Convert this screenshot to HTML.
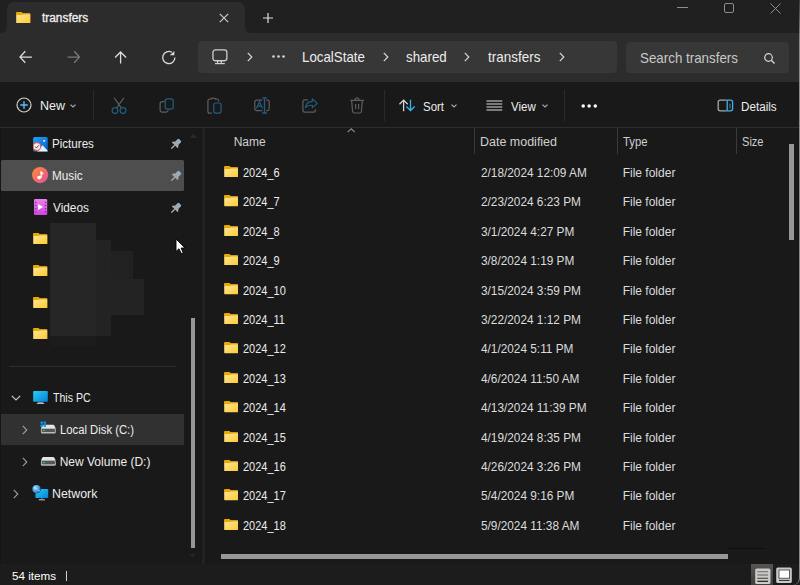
<!DOCTYPE html>
<html><head><meta charset="utf-8"><style>
html,body{margin:0;padding:0;width:800px;height:585px;overflow:hidden;background:#191919;}
.r{position:absolute;display:block;}
.t{position:absolute;white-space:nowrap;line-height:1;font-family:"Liberation Sans", sans-serif;}
</style></head><body>
<svg width="0" height="0" style="position:absolute"><defs><linearGradient id="fg" x1="0" y1="0" x2="1" y2="1"><stop offset="0" stop-color="#ffe690"/><stop offset="1" stop-color="#fcc934"/></linearGradient></defs></svg>
<div class="r" style="left:0px;top:0px;width:800px;height:33px;background:#202020;"></div>
<div class="r" style="left:7px;top:2px;width:238px;height:40px;background:#2c2c2c;border-radius:7px 7px 0 0"></div>
<div class="r" style="left:0;top:25px;width:8px;height:9px;background:#2c2c2c"></div>
<div class="r" style="left:0;top:0;width:7px;height:33px;background:#202020;border-radius:0 0 6px 0"></div>
<div class="r" style="left:244px;top:25px;width:8px;height:9px;background:#2c2c2c"></div>
<div class="r" style="left:245px;top:0;width:555px;height:33px;background:#202020;border-radius:0 0 0 6px"></div>
<svg class="r" style="left:16.2px;top:12px" width="14.6" height="11.4" viewBox="0 0 14.6 11.4"><path d="M0.3 1.1 Q0.3 0.1 1.3 0.1 L4.9 0.1 Q5.4 0.1 5.8 0.5 L6.6 1.3 L13.5 1.3 Q14.4 1.3 14.4 2.2 L14.4 3 L0.3 3 Z" fill="#f7c640"/><path d="M0.3 1.1 Q0.3 0.1 1.3 0.1 L4.9 0.1 Q5.4 0.1 5.8 0.5 L6.6 1.3 L6.6 3 L0.3 3 Z" fill="#eba800"/><path d="M0.2 2.9 L14.4 2.9 L14.4 10.5 Q14.4 11.3 13.6 11.3 L1 11.3 Q0.2 11.3 0.2 10.5 Z" fill="url(#fg)"/></svg>
<div class="t" style="left:42.00px;top:11.84px;font-size:12px;color:#f0f0f0;-webkit-text-stroke:0.3px #f0f0f0;transform:scaleX(0.99);transform-origin:0 0;">transfers</div>
<svg class="r" style="left:219px;top:13px" width="10" height="10" viewBox="0 0 10 10"><path d="M0.8 0.8 L9.2 9.2 M9.2 0.8 L0.8 9.2" stroke="#d0d0d0" stroke-width="1.1"/></svg>
<svg class="r" style="left:263px;top:13px" width="10" height="10" viewBox="0 0 10 10"><path d="M5 0 L5 10 M0 5 L10 5" stroke="#e0e0e0" stroke-width="1.2"/></svg>
<svg class="r" style="left:677px;top:7px" width="11" height="1" viewBox="0 0 11 1"><path d="M0 0.5 L11 0.5" stroke="#8c8c8c" stroke-width="1"/></svg>
<svg class="r" style="left:724px;top:3px" width="10" height="10" viewBox="0 0 10 10"><rect x="0.5" y="0.5" width="9" height="9" rx="1.5" fill="none" stroke="#8c8c8c" stroke-width="1"/></svg>
<svg class="r" style="left:770px;top:3px" width="11" height="11" viewBox="0 0 11 11"><path d="M0.5 0.5 L10.5 10.5 M10.5 0.5 L0.5 10.5" stroke="#8c8c8c" stroke-width="1"/></svg>
<div class="r" style="left:0px;top:33px;width:800px;height:49px;background:#2c2c2c;"></div>
<svg class="r" style="left:14px;top:46px" width="30" height="22" viewBox="0 0 30 22"><path d="M11.3 5.3 L6 11.1 L11.3 16.8 M6.4 11.1 H17.9" fill="none" stroke="#dcdcdc" stroke-width="1.3"/></svg>
<svg class="r" style="left:62px;top:46px" width="30" height="22" viewBox="0 0 30 22"><path d="M12.2 5.3 L17.5 11.1 L12.2 16.8 M17.1 11.1 H5.6" fill="none" stroke="#7a7a7a" stroke-width="1.3"/></svg>
<svg class="r" style="left:108px;top:46px" width="30" height="22" viewBox="0 0 30 22"><path d="M7.1 11.5 L12.6 6 L18.1 11.5 M12.6 6.5 V17.5" fill="none" stroke="#dcdcdc" stroke-width="1.3"/></svg>
<svg class="r" style="left:156px;top:46px" width="30" height="22" viewBox="0 0 30 22"><path d="M15.85 6.22 A6.1 6.1 0 1 0 18.9 11.5" fill="none" stroke="#dcdcdc" stroke-width="1.3"/><path d="M13.8 9.3 L18.3 4.9 L18.3 9.3 Z" fill="#dcdcdc"/></svg>
<div class="r" style="left:198px;top:41px;width:419px;height:31.5px;background:#373737;border-radius:4px"></div>
<svg class="r" style="left:212px;top:48.5px" width="16" height="16" viewBox="0 0 16 16"><rect x="0.95" y="0.95" width="13.9" height="10.8" rx="2.4" fill="none" stroke="#cfcfcf" stroke-width="1.3"/><path d="M5.6 11.5 V14.2 M9.3 11.5 V14.2" stroke="#cfcfcf" stroke-width="1.2"/><path d="M3 14.6 H12.8" stroke="#cfcfcf" stroke-width="1.2"/></svg>
<svg class="r" style="left:247px;top:52.1px" width="6" height="10" viewBox="0 0 6 10"><path d="M0.8 0.8 L4.8 5 L0.8 9.2" fill="none" stroke="#d8d8d8" stroke-width="1.2"/></svg>
<svg class="r" style="left:272px;top:55px" width="13" height="3" viewBox="0 0 13 3"><circle cx="1.5" cy="1.5" r="1.3" fill="#d8d8d8"/><circle cx="6.5" cy="1.5" r="1.3" fill="#d8d8d8"/><circle cx="11.5" cy="1.5" r="1.3" fill="#d8d8d8"/></svg>
<div class="t" style="left:301.70px;top:49.73px;font-size:14.5px;color:#ededed;transform:scaleX(0.918);transform-origin:0 0;">LocalState</div>
<svg class="r" style="left:383px;top:52.1px" width="6" height="10" viewBox="0 0 6 10"><path d="M0.8 0.8 L4.8 5 L0.8 9.2" fill="none" stroke="#d8d8d8" stroke-width="1.2"/></svg>
<div class="t" style="left:405.50px;top:49.73px;font-size:14.5px;color:#ededed;transform:scaleX(0.918);transform-origin:0 0;">shared</div>
<svg class="r" style="left:464px;top:52.1px" width="6" height="10" viewBox="0 0 6 10"><path d="M0.8 0.8 L4.8 5 L0.8 9.2" fill="none" stroke="#d8d8d8" stroke-width="1.2"/></svg>
<div class="t" style="left:488.00px;top:49.73px;font-size:14.5px;color:#ededed;transform:scaleX(0.929);transform-origin:0 0;">transfers</div>
<svg class="r" style="left:558.5px;top:52.1px" width="6" height="10" viewBox="0 0 6 10"><path d="M0.8 0.8 L4.8 5 L0.8 9.2" fill="none" stroke="#d8d8d8" stroke-width="1.2"/></svg>
<div class="r" style="left:625.5px;top:41.5px;width:163px;height:31.5px;background:#373737;border-radius:4px"></div>
<div class="t" style="left:639.60px;top:50.73px;font-size:14.5px;color:#c8c8c8;transform:scaleX(0.921);transform-origin:0 0;">Search transfers</div>
<svg class="r" style="left:764px;top:52.5px" width="11" height="11" viewBox="0 0 11 11"><circle cx="4.5" cy="4.5" r="3.8" fill="none" stroke="#d8d8d8" stroke-width="1.2"/><path d="M7.3 7.3 L10.5 10.5" stroke="#d8d8d8" stroke-width="1.3"/></svg>
<div class="r" style="left:0px;top:82px;width:800px;height:45px;background:#191919;"></div>
<div class="r" style="left:0px;top:127px;width:800px;height:1px;background:#2e2e2e;"></div>
<svg class="r" style="left:16px;top:97px" width="16" height="16" viewBox="0 0 16 16"><circle cx="8" cy="8" r="7" fill="none" stroke="#cfcfcf" stroke-width="1.2"/><path d="M8 4.2 L8 11.8 M4.2 8 L11.8 8" stroke="#4cc2ff" stroke-width="1.4"/></svg>
<div class="t" style="left:39.70px;top:100.34px;font-size:12px;color:#ededed;transform:scaleX(1.04);transform-origin:0 0;">New</div>
<svg class="r" style="left:70px;top:103.5px" width="6" height="4" viewBox="0 0 6 4"><path d="M0.5 0.6 L3 3 L5.5 0.6" fill="none" stroke="#a8a8a8" stroke-width="1.2"/></svg>
<div class="r" style="left:93px;top:90px;width:1px;height:30px;background:#2b2b2b;"></div>
<svg class="r" style="left:108px;top:94px" width="22" height="22" viewBox="0 0 22 22"><path d="M6.2 3.9 L13.3 13.9 M15.8 3.9 L8.7 13.9" stroke="#5e5e5e" stroke-width="1.1" fill="none"/><circle cx="7" cy="16.5" r="2.9" fill="none" stroke="#1f5f87" stroke-width="1.15"/><circle cx="15" cy="16.5" r="2.9" fill="none" stroke="#1f5f87" stroke-width="1.15"/></svg>
<svg class="r" style="left:155px;top:94px" width="22" height="22" viewBox="0 0 22 22"><path d="M9.6 7.7 L7.2 7.7 Q5.1 7.7 5.1 9.8 L5.1 16.1 Q5.1 18.2 7.2 18.2 L11.1 18.2 Q13 18.2 13.2 16.3" fill="none" stroke="#5e5e5e" stroke-width="1.2"/><rect x="10.2" y="4.9" width="8" height="10.3" rx="2.2" fill="none" stroke="#1f5f87" stroke-width="1.2"/></svg>
<svg class="r" style="left:203px;top:94px" width="22" height="22" viewBox="0 0 22 22"><path d="M8 5 L6.9 5 Q4.9 5 4.9 7 L4.9 17.2 Q4.9 19.2 6.9 19.2 L8.8 19.2 M12.6 5 L13.7 5 Q15.7 5 15.7 7 L15.7 7.6" fill="none" stroke="#5e5e5e" stroke-width="1.2"/><path d="M7.6 5.6 Q7.8 4.1 10.3 4.1 Q12.8 4.1 13 5.6" fill="none" stroke="#5e5e5e" stroke-width="1.2"/><rect x="10.8" y="9" width="7.2" height="10.1" rx="2" fill="none" stroke="#1f5f87" stroke-width="1.2"/></svg>
<svg class="r" style="left:251px;top:94px" width="22" height="22" viewBox="0 0 22 22"><path d="M11.3 6.2 L5.6 6.2 Q3.8 6.2 3.8 8 L3.8 14.8 Q3.8 16.6 5.6 16.6 L11.3 16.6 M15.2 6.2 L16.4 6.2 Q18.2 6.2 18.2 8 L18.2 14.8 Q18.2 16.6 16.4 16.6 L15.2 16.6" fill="none" stroke="#5e5e5e" stroke-width="1.2"/><path d="M13.5 3.5 V19.3 M11.3 3.8 H15.8 M11.3 19 H15.8" stroke="#1f5f87" stroke-width="1.3"/><path d="M5.4 14.4 L8.5 7.9 L11.6 14.4 M6.5 12.2 H10.5" fill="none" stroke="#1f5f87" stroke-width="1.2"/></svg>
<svg class="r" style="left:298px;top:94px" width="22" height="22" viewBox="0 0 22 22"><path d="M9.8 5.8 L6.8 5.8 Q4.9 5.8 4.9 7.8 L4.9 16.3 Q4.9 18.2 6.8 18.2 L15.5 18.2 Q17.4 18.2 17.4 16.3 L17.4 15.2" fill="none" stroke="#5e5e5e" stroke-width="1.2"/><path d="M14.3 4.9 L19.2 9.4 L14.3 13.6 L14.3 11.3 Q9.5 11 7.5 13.6 Q8.5 7.6 14.3 7.3 Z" fill="none" stroke="#1f5f87" stroke-width="1.2" stroke-linejoin="round"/></svg>
<svg class="r" style="left:346px;top:94px" width="22" height="22" viewBox="0 0 22 22"><path d="M4.1 6.3 H18 M8.8 6.2 Q9.3 3.9 11 3.9 Q12.7 3.9 13.2 6.2 M5.6 6.3 L6.6 17.2 Q6.8 19 8.6 19 L13.4 19 Q15.2 19 15.4 17.2 L16.4 6.3 M9.6 10 V15 M12.6 10 V15" fill="none" stroke="#5e5e5e" stroke-width="1.2"/></svg>
<div class="r" style="left:384px;top:90px;width:1px;height:31px;background:#2b2b2b;"></div>
<svg class="r" style="left:394px;top:94px" width="26" height="22" viewBox="0 0 26 22"><path d="M9.6 17.3 V6.3 M5.5 10.2 L9.6 6.1 L13.7 10.2" fill="none" stroke="#d4d4d4" stroke-width="1.3"/><path d="M16.5 5.8 V16.3 M12.4 12.5 L16.5 16.5 L20.6 12.5" fill="none" stroke="#38b4f0" stroke-width="1.3"/></svg>
<div class="t" style="left:423.00px;top:100.54px;font-size:12px;color:#ededed;transform:scaleX(0.955);transform-origin:0 0;">Sort</div>
<svg class="r" style="left:451px;top:103.5px" width="6" height="4" viewBox="0 0 6 4"><path d="M0.5 0.6 L3 3 L5.5 0.6" fill="none" stroke="#a8a8a8" stroke-width="1.2"/></svg>
<svg class="r" style="left:482px;top:94px" width="26" height="22" viewBox="0 0 26 22"><path d="M4.5 7 H20.3 M4.5 10 H20.3 M4.5 13 H20.3 M4.5 16 H20.3" stroke="#9c9c9c" stroke-width="1.7"/></svg>
<div class="t" style="left:510.60px;top:100.54px;font-size:12px;color:#ededed;transform:scaleX(0.962);transform-origin:0 0;">View</div>
<svg class="r" style="left:542px;top:103.5px" width="6" height="4" viewBox="0 0 6 4"><path d="M0.5 0.6 L3 3 L5.5 0.6" fill="none" stroke="#a8a8a8" stroke-width="1.2"/></svg>
<div class="r" style="left:564px;top:90px;width:1px;height:31px;background:#2b2b2b;"></div>
<svg class="r" style="left:581px;top:104px" width="17" height="4" viewBox="0 0 17 4"><circle cx="2.2" cy="1.9" r="1.75" fill="#ffffff"/><circle cx="8.1" cy="1.9" r="1.75" fill="#ffffff"/><circle cx="14.3" cy="1.9" r="1.75" fill="#ffffff"/></svg>
<svg class="r" style="left:712px;top:94px" width="26" height="22" viewBox="0 0 26 22"><path d="M14.6 6.2 L8.3 6.2 Q6.2 6.2 6.2 8.3 L6.2 14.7 Q6.2 16.8 8.3 16.8 L14.6 16.8" fill="none" stroke="#a8a8a8" stroke-width="1.3"/><path d="M15.2 6.2 L18.5 6.2 Q20.6 6.2 20.6 8.3 L20.6 14.7 Q20.6 16.8 18.5 16.8 L15.2 16.8 Z" fill="none" stroke="#40b0ea" stroke-width="1.3"/><rect x="17.4" y="9.6" width="1.1" height="4.8" fill="#2f7fae"/></svg>
<div class="t" style="left:740.80px;top:100.54px;font-size:12px;color:#ededed;transform:scaleX(0.972);transform-origin:0 0;">Details</div>
<div class="r" style="left:0px;top:128px;width:202px;height:436px;background:#191919;"></div>
<div class="r" style="left:202px;top:128px;width:2.8px;height:436px;background:#222222;"></div>
<div class="r" style="left:1px;top:160px;width:183px;height:30.5px;background:#4e4e4e;border-radius:1.5px"></div>
<svg class="r" style="left:33px;top:136.5px" width="15" height="15" viewBox="0 0 15 15"><defs><linearGradient id="pg" x1="0" y1="0" x2="0.6" y2="1"><stop offset="0" stop-color="#249ff6"/><stop offset="1" stop-color="#0866d2"/></linearGradient></defs><rect x="0.1" y="0" width="14.6" height="14.5" rx="1.5" fill="url(#pg)"/><path d="M4 14.5 L9.6 8.2 L14.7 13.8 L14.7 14.5 Z" fill="#e6f3ff"/><rect x="10.2" y="2.9" width="1.9" height="1.9" rx="0.7" fill="#ffffff"/><circle cx="3.9" cy="9.6" r="3.8" fill="#efefef" stroke="#ff5a3c" stroke-width="1.1"/><path d="M2.2 9.6 L3.4 11 L5.8 8.3" fill="none" stroke="#4a4a4a" stroke-width="1"/></svg>
<div class="t" style="left:51.80px;top:138.04px;font-size:12px;color:#ededed;transform:scaleX(0.967);transform-origin:0 0;">Pictures</div>
<svg class="r" style="left:32.3px;top:167.1px" width="17" height="17" viewBox="0 0 17 17"><defs><linearGradient id="mg" x1="0" y1="0" x2="1" y2="1"><stop offset="0" stop-color="#ff8f30"/><stop offset="0.6" stop-color="#f26670"/><stop offset="1" stop-color="#cf55b0"/></linearGradient></defs><circle cx="8.1" cy="8.1" r="8.1" fill="url(#mg)"/><path d="M9.2 4.6 L9.2 10.6" stroke="#fff" stroke-width="1.3"/><path d="M8.6 4.3 L11.6 6.2 L10.6 7.6 L8.6 6.6 Z" fill="#fff"/><ellipse cx="7.1" cy="10.6" rx="2" ry="1.8" fill="#fff"/></svg>
<div class="t" style="left:51.80px;top:170.04px;font-size:12px;color:#ededed;transform:scaleX(0.98);transform-origin:0 0;">Music</div>
<svg class="r" style="left:33.9px;top:199.1px" width="14" height="16" viewBox="0 0 14 16"><defs><linearGradient id="vg" x1="0" y1="0" x2="0" y2="1"><stop offset="0" stop-color="#ec80ee"/><stop offset="1" stop-color="#cf48df"/></linearGradient></defs><rect x="0" y="0" width="13.2" height="16" rx="1.2" fill="url(#vg)"/><path d="M1 3.4 H2.4 M1 6.4 H2.4 M1 9.7 H2.4 M1 12.8 H2.4 M10.8 3.4 H12.2 M10.8 6.4 H12.2 M10.8 9.7 H12.2 M10.8 12.8 H12.2" stroke="#7d3b86" stroke-width="1.3"/><path d="M4.1 4.9 L9.1 8 L4.1 11.1 Z" fill="#ffffff"/></svg>
<div class="t" style="left:52.60px;top:202.04px;font-size:12px;color:#ededed;transform:scaleX(0.983);transform-origin:0 0;">Videos</div>
<svg class="r" style="left:166px;top:134px" width="20" height="20" viewBox="0 0 20 20"><g transform="translate(9.6,10.4) rotate(45) scale(0.9)" fill="#9aabb5"><rect x="-2.6" y="-7" width="5.2" height="6" rx="1.4"/><path d="M-2.6 -2 L-4.6 0.6 Q-4.8 1.4 -4 1.4 L4 1.4 Q4.8 1.4 4.6 0.6 L2.6 -2 Z"/><rect x="-0.75" y="1" width="1.5" height="5.8" rx="0.7"/></g></svg>
<svg class="r" style="left:166px;top:166px" width="20" height="20" viewBox="0 0 20 20"><g transform="translate(9.6,10.4) rotate(45) scale(0.9)" fill="#9aabb5"><rect x="-2.6" y="-7" width="5.2" height="6" rx="1.4"/><path d="M-2.6 -2 L-4.6 0.6 Q-4.8 1.4 -4 1.4 L4 1.4 Q4.8 1.4 4.6 0.6 L2.6 -2 Z"/><rect x="-0.75" y="1" width="1.5" height="5.8" rx="0.7"/></g></svg>
<svg class="r" style="left:166px;top:198px" width="20" height="20" viewBox="0 0 20 20"><g transform="translate(9.6,10.4) rotate(45) scale(0.9)" fill="#9aabb5"><rect x="-2.6" y="-7" width="5.2" height="6" rx="1.4"/><path d="M-2.6 -2 L-4.6 0.6 Q-4.8 1.4 -4 1.4 L4 1.4 Q4.8 1.4 4.6 0.6 L2.6 -2 Z"/><rect x="-0.75" y="1" width="1.5" height="5.8" rx="0.7"/></g></svg>
<div class="r" style="left:50px;top:223px;width:45.7px;height:113px;background:#262626;"></div>
<div class="r" style="left:50px;top:336px;width:45.7px;height:10px;background:#1c1c1c;border-radius:0 0 2px 2px"></div>
<div class="r" style="left:95.7px;top:240px;width:15px;height:96px;background:#232323;"></div>
<div class="r" style="left:110.7px;top:250.7px;width:22px;height:28.4px;background:#212121;"></div>
<div class="r" style="left:110.7px;top:279.1px;width:33.5px;height:35.5px;background:#232323;"></div>
<svg class="r" style="left:33px;top:233px" width="14.6" height="11.4" viewBox="0 0 14.6 11.4"><path d="M0.3 1.1 Q0.3 0.1 1.3 0.1 L4.9 0.1 Q5.4 0.1 5.8 0.5 L6.6 1.3 L13.5 1.3 Q14.4 1.3 14.4 2.2 L14.4 3 L0.3 3 Z" fill="#f7c640"/><path d="M0.3 1.1 Q0.3 0.1 1.3 0.1 L4.9 0.1 Q5.4 0.1 5.8 0.5 L6.6 1.3 L6.6 3 L0.3 3 Z" fill="#eba800"/><path d="M0.2 2.9 L14.4 2.9 L14.4 10.5 Q14.4 11.3 13.6 11.3 L1 11.3 Q0.2 11.3 0.2 10.5 Z" fill="url(#fg)"/></svg>
<svg class="r" style="left:33px;top:264.5px" width="14.6" height="11.4" viewBox="0 0 14.6 11.4"><path d="M0.3 1.1 Q0.3 0.1 1.3 0.1 L4.9 0.1 Q5.4 0.1 5.8 0.5 L6.6 1.3 L13.5 1.3 Q14.4 1.3 14.4 2.2 L14.4 3 L0.3 3 Z" fill="#f7c640"/><path d="M0.3 1.1 Q0.3 0.1 1.3 0.1 L4.9 0.1 Q5.4 0.1 5.8 0.5 L6.6 1.3 L6.6 3 L0.3 3 Z" fill="#eba800"/><path d="M0.2 2.9 L14.4 2.9 L14.4 10.5 Q14.4 11.3 13.6 11.3 L1 11.3 Q0.2 11.3 0.2 10.5 Z" fill="url(#fg)"/></svg>
<svg class="r" style="left:33px;top:296.5px" width="14.6" height="11.4" viewBox="0 0 14.6 11.4"><path d="M0.3 1.1 Q0.3 0.1 1.3 0.1 L4.9 0.1 Q5.4 0.1 5.8 0.5 L6.6 1.3 L13.5 1.3 Q14.4 1.3 14.4 2.2 L14.4 3 L0.3 3 Z" fill="#f7c640"/><path d="M0.3 1.1 Q0.3 0.1 1.3 0.1 L4.9 0.1 Q5.4 0.1 5.8 0.5 L6.6 1.3 L6.6 3 L0.3 3 Z" fill="#eba800"/><path d="M0.2 2.9 L14.4 2.9 L14.4 10.5 Q14.4 11.3 13.6 11.3 L1 11.3 Q0.2 11.3 0.2 10.5 Z" fill="url(#fg)"/></svg>
<svg class="r" style="left:33px;top:328px" width="14.6" height="11.4" viewBox="0 0 14.6 11.4"><path d="M0.3 1.1 Q0.3 0.1 1.3 0.1 L4.9 0.1 Q5.4 0.1 5.8 0.5 L6.6 1.3 L13.5 1.3 Q14.4 1.3 14.4 2.2 L14.4 3 L0.3 3 Z" fill="#f7c640"/><path d="M0.3 1.1 Q0.3 0.1 1.3 0.1 L4.9 0.1 Q5.4 0.1 5.8 0.5 L6.6 1.3 L6.6 3 L0.3 3 Z" fill="#eba800"/><path d="M0.2 2.9 L14.4 2.9 L14.4 10.5 Q14.4 11.3 13.6 11.3 L1 11.3 Q0.2 11.3 0.2 10.5 Z" fill="url(#fg)"/></svg>
<svg class="r" style="left:175px;top:238px" width="11" height="17" viewBox="0 0 11 17"><path d="M1 1 L1 13.5 L4 10.8 L6.2 15.6 L8.2 14.7 L6.1 10 L10 10 Z" fill="#ffffff" stroke="#000000" stroke-width="0.9" stroke-linejoin="round"/></svg>
<svg class="r" style="left:188.5px;top:132px" width="9" height="7" viewBox="0 0 9 7"><path d="M1 6 L4.5 1.5 L8 6 Z" fill="#2a2a2a"/></svg>
<div class="r" style="left:190.5px;top:317.5px;width:4.6px;height:230.5px;background:#979797;"></div>
<svg class="r" style="left:188px;top:552.5px" width="9" height="7" viewBox="0 0 9 7"><path d="M1.5 1 L4.5 5 L7.5 1 Z" fill="#262626"/></svg>
<div class="r" style="left:8.5px;top:366px;width:167.5px;height:1px;background:#2e2e2e;"></div>
<svg class="r" style="left:10.5px;top:394.5px" width="10" height="6" viewBox="0 0 10 6"><path d="M0.8 0.8 L5 5 L9.2 0.8" fill="none" stroke="#c8c8c8" stroke-width="1.2"/></svg>
<svg class="r" style="left:33px;top:391px" width="15" height="13" viewBox="0 0 15 13"><defs><linearGradient id="pcg" x1="0" y1="0" x2="1" y2="1"><stop offset="0" stop-color="#22d0f8"/><stop offset="1" stop-color="#0a7ed6"/></linearGradient></defs><rect x="0.2" y="0.1" width="14.6" height="10.6" rx="0.8" fill="url(#pcg)"/><path d="M5 11.5 H10" stroke="#7f8a92" stroke-width="1"/><path d="M3.8 12.4 H11.2" stroke="#b8c0c6" stroke-width="1.1"/></svg>
<div class="t" style="left:52.60px;top:392.34px;font-size:12px;color:#ededed;transform:scaleX(0.883);transform-origin:0 0;">This PC</div>
<div class="r" style="left:1px;top:414px;width:183px;height:30.5px;background:#313131;"></div>
<svg class="r" style="left:21.5px;top:425px" width="6" height="10" viewBox="0 0 6 10"><path d="M0.8 0.8 L4.8 5 L0.8 9.2" fill="none" stroke="#a0a0a0" stroke-width="1.1"/></svg>
<svg class="r" style="left:40px;top:420px" width="17" height="15" viewBox="0 0 17 15"><g transform="translate(0,4.8)"><path d="M3.3 0 L13.2 0 Q13.8 0 14.2 0.5 L15.8 3.6 L0.9 3.6 L2.4 0.5 Q2.8 0 3.3 0 Z" fill="#e4e4e4"/><rect x="0.9" y="3.3" width="14.9" height="5.5" rx="1.5" fill="#bababa"/><rect x="1.8" y="4.2" width="13.1" height="3.1" rx="0.6" fill="#555555"/><rect x="2.8" y="5.2" width="2.4" height="1.1" rx="0.5" fill="#22c55e"/></g><rect x="0.5" y="1.4" width="2.4" height="2.4" rx="0.6" fill="#0b9bff"/><rect x="3.6" y="1.4" width="2.4" height="2.4" rx="0.6" fill="#0b9bff"/><rect x="0.5" y="4.6" width="2.4" height="2.4" rx="0.6" fill="#0b9bff"/><rect x="3.6" y="4.6" width="2.4" height="2.4" rx="0.6" fill="#0b9bff"/></svg>
<div class="t" style="left:59.70px;top:424.34px;font-size:12px;color:#ededed;transform:scaleX(0.94);transform-origin:0 0;">Local Disk (C:)</div>
<svg class="r" style="left:21.5px;top:457px" width="6" height="10" viewBox="0 0 6 10"><path d="M0.8 0.8 L4.8 5 L0.8 9.2" fill="none" stroke="#a0a0a0" stroke-width="1.1"/></svg>
<svg class="r" style="left:40px;top:456px" width="17" height="10" viewBox="0 0 17 10"><g transform="translate(0,0.9)"><path d="M3.3 0 L13.2 0 Q13.8 0 14.2 0.5 L15.8 3.6 L0.9 3.6 L2.4 0.5 Q2.8 0 3.3 0 Z" fill="#e4e4e4"/><rect x="0.9" y="3.3" width="14.9" height="5.5" rx="1.5" fill="#bababa"/><rect x="1.8" y="4.2" width="13.1" height="3.1" rx="0.6" fill="#555555"/><rect x="2.8" y="5.2" width="2.4" height="1.1" rx="0.5" fill="#22c55e"/></g></svg>
<div class="t" style="left:59.70px;top:456.34px;font-size:12px;color:#ededed;transform:scaleX(1.0);transform-origin:0 0;">New Volume (D:)</div>
<svg class="r" style="left:13px;top:489px" width="6" height="10" viewBox="0 0 6 10"><path d="M0.8 0.8 L4.8 5 L0.8 9.2" fill="none" stroke="#a0a0a0" stroke-width="1.1"/></svg>
<svg class="r" style="left:32px;top:484px" width="18" height="18" viewBox="0 0 18 18"><defs><linearGradient id="nmg" x1="0" y1="0" x2="1" y2="1"><stop offset="0" stop-color="#22d0f8"/><stop offset="1" stop-color="#0a7ed6"/></linearGradient><radialGradient id="glg" cx="0.35" cy="0.35" r="0.7"><stop offset="0" stop-color="#9fe0ff"/><stop offset="1" stop-color="#1a72c0"/></radialGradient></defs><rect x="3.5" y="5" width="12.7" height="9" rx="0.6" fill="url(#nmg)"/><path d="M9.85 14 V15.2" stroke="#7f8a92" stroke-width="1"/><path d="M6.8 15.8 H12.9" stroke="#b8c0c6" stroke-width="1.1"/><circle cx="4.5" cy="5" r="4.3" fill="#191919"/><circle cx="4.5" cy="5" r="4.1" fill="url(#glg)"/><path d="M2.2 4 Q4 3.2 5.5 5.5 Q6.2 7 7.8 6.8" fill="none" stroke="#d8f2ff" stroke-width="0.7" opacity="0.8"/></svg>
<div class="t" style="left:51.80px;top:488.34px;font-size:12px;color:#ededed;transform:scaleX(1.03);transform-origin:0 0;">Network</div>
<div class="r" style="left:204.5px;top:128px;width:596px;height:436px;background:#191919;"></div>
<div class="r" style="left:474px;top:128px;width:1px;height:26px;background:#3a3a3a;"></div>
<div class="r" style="left:617px;top:128px;width:1px;height:26px;background:#3a3a3a;"></div>
<div class="r" style="left:736px;top:128px;width:1px;height:26px;background:#3a3a3a;"></div>
<svg class="r" style="left:340px;top:124px" width="22" height="16" viewBox="0 0 22 16"><path d="M7.7 8.1 L11.2 4.9 L14.8 8.2" fill="none" stroke="#8c8c8c" stroke-width="1.15"/></svg>
<div class="t" style="left:233.70px;top:135.54px;font-size:12px;color:#d0d0d0;">Name</div>
<div class="t" style="left:479.90px;top:135.64px;font-size:12px;color:#d0d0d0;transform:scaleX(1.04);transform-origin:0 0;">Date modified</div>
<div class="t" style="left:623.30px;top:135.64px;font-size:12px;color:#d0d0d0;transform:scaleX(0.94);transform-origin:0 0;">Type</div>
<div class="t" style="left:742.30px;top:135.64px;font-size:12px;color:#d0d0d0;transform:scaleX(0.922);transform-origin:0 0;">Size</div>
<svg class="r" style="left:223.6px;top:165.8px" width="14.6" height="11.4" viewBox="0 0 14.6 11.4"><path d="M0.3 1.1 Q0.3 0.1 1.3 0.1 L4.9 0.1 Q5.4 0.1 5.8 0.5 L6.6 1.3 L13.5 1.3 Q14.4 1.3 14.4 2.2 L14.4 3 L0.3 3 Z" fill="#f7c640"/><path d="M0.3 1.1 Q0.3 0.1 1.3 0.1 L4.9 0.1 Q5.4 0.1 5.8 0.5 L6.6 1.3 L6.6 3 L0.3 3 Z" fill="#eba800"/><path d="M0.2 2.9 L14.4 2.9 L14.4 10.5 Q14.4 11.3 13.6 11.3 L1 11.3 Q0.2 11.3 0.2 10.5 Z" fill="url(#fg)"/></svg>
<div class="t" style="left:242.80px;top:166.84px;font-size:12px;color:#ededed;transform:scaleX(0.915);transform-origin:0 0;">2024_6</div>
<div class="t" style="left:480.70px;top:166.84px;font-size:12px;color:#dcdcdc;transform:scaleX(0.985);transform-origin:0 0;">2/18/2024 12:09 AM</div>
<div class="t" style="left:622.70px;top:166.84px;font-size:12px;color:#dcdcdc;">File folder</div>
<svg class="r" style="left:223.6px;top:195.217px" width="14.6" height="11.4" viewBox="0 0 14.6 11.4"><path d="M0.3 1.1 Q0.3 0.1 1.3 0.1 L4.9 0.1 Q5.4 0.1 5.8 0.5 L6.6 1.3 L13.5 1.3 Q14.4 1.3 14.4 2.2 L14.4 3 L0.3 3 Z" fill="#f7c640"/><path d="M0.3 1.1 Q0.3 0.1 1.3 0.1 L4.9 0.1 Q5.4 0.1 5.8 0.5 L6.6 1.3 L6.6 3 L0.3 3 Z" fill="#eba800"/><path d="M0.2 2.9 L14.4 2.9 L14.4 10.5 Q14.4 11.3 13.6 11.3 L1 11.3 Q0.2 11.3 0.2 10.5 Z" fill="url(#fg)"/></svg>
<div class="t" style="left:242.80px;top:196.26px;font-size:12px;color:#ededed;transform:scaleX(0.915);transform-origin:0 0;">2024_7</div>
<div class="t" style="left:480.70px;top:196.26px;font-size:12px;color:#dcdcdc;transform:scaleX(0.985);transform-origin:0 0;">2/23/2024 6:23 PM</div>
<div class="t" style="left:622.70px;top:196.26px;font-size:12px;color:#dcdcdc;">File folder</div>
<svg class="r" style="left:223.6px;top:224.63400000000001px" width="14.6" height="11.4" viewBox="0 0 14.6 11.4"><path d="M0.3 1.1 Q0.3 0.1 1.3 0.1 L4.9 0.1 Q5.4 0.1 5.8 0.5 L6.6 1.3 L13.5 1.3 Q14.4 1.3 14.4 2.2 L14.4 3 L0.3 3 Z" fill="#f7c640"/><path d="M0.3 1.1 Q0.3 0.1 1.3 0.1 L4.9 0.1 Q5.4 0.1 5.8 0.5 L6.6 1.3 L6.6 3 L0.3 3 Z" fill="#eba800"/><path d="M0.2 2.9 L14.4 2.9 L14.4 10.5 Q14.4 11.3 13.6 11.3 L1 11.3 Q0.2 11.3 0.2 10.5 Z" fill="url(#fg)"/></svg>
<div class="t" style="left:242.80px;top:225.68px;font-size:12px;color:#ededed;transform:scaleX(0.915);transform-origin:0 0;">2024_8</div>
<div class="t" style="left:480.70px;top:225.68px;font-size:12px;color:#dcdcdc;transform:scaleX(0.985);transform-origin:0 0;">3/1/2024 4:27 PM</div>
<div class="t" style="left:622.70px;top:225.68px;font-size:12px;color:#dcdcdc;">File folder</div>
<svg class="r" style="left:223.6px;top:254.051px" width="14.6" height="11.4" viewBox="0 0 14.6 11.4"><path d="M0.3 1.1 Q0.3 0.1 1.3 0.1 L4.9 0.1 Q5.4 0.1 5.8 0.5 L6.6 1.3 L13.5 1.3 Q14.4 1.3 14.4 2.2 L14.4 3 L0.3 3 Z" fill="#f7c640"/><path d="M0.3 1.1 Q0.3 0.1 1.3 0.1 L4.9 0.1 Q5.4 0.1 5.8 0.5 L6.6 1.3 L6.6 3 L0.3 3 Z" fill="#eba800"/><path d="M0.2 2.9 L14.4 2.9 L14.4 10.5 Q14.4 11.3 13.6 11.3 L1 11.3 Q0.2 11.3 0.2 10.5 Z" fill="url(#fg)"/></svg>
<div class="t" style="left:242.80px;top:255.09px;font-size:12px;color:#ededed;transform:scaleX(0.915);transform-origin:0 0;">2024_9</div>
<div class="t" style="left:480.70px;top:255.09px;font-size:12px;color:#dcdcdc;transform:scaleX(0.985);transform-origin:0 0;">3/8/2024 1:19 PM</div>
<div class="t" style="left:622.70px;top:255.09px;font-size:12px;color:#dcdcdc;">File folder</div>
<svg class="r" style="left:223.6px;top:283.468px" width="14.6" height="11.4" viewBox="0 0 14.6 11.4"><path d="M0.3 1.1 Q0.3 0.1 1.3 0.1 L4.9 0.1 Q5.4 0.1 5.8 0.5 L6.6 1.3 L13.5 1.3 Q14.4 1.3 14.4 2.2 L14.4 3 L0.3 3 Z" fill="#f7c640"/><path d="M0.3 1.1 Q0.3 0.1 1.3 0.1 L4.9 0.1 Q5.4 0.1 5.8 0.5 L6.6 1.3 L6.6 3 L0.3 3 Z" fill="#eba800"/><path d="M0.2 2.9 L14.4 2.9 L14.4 10.5 Q14.4 11.3 13.6 11.3 L1 11.3 Q0.2 11.3 0.2 10.5 Z" fill="url(#fg)"/></svg>
<div class="t" style="left:242.80px;top:284.51px;font-size:12px;color:#ededed;transform:scaleX(0.915);transform-origin:0 0;">2024_10</div>
<div class="t" style="left:480.70px;top:284.51px;font-size:12px;color:#dcdcdc;transform:scaleX(0.985);transform-origin:0 0;">3/15/2024 3:59 PM</div>
<div class="t" style="left:622.70px;top:284.51px;font-size:12px;color:#dcdcdc;">File folder</div>
<svg class="r" style="left:223.6px;top:312.88500000000005px" width="14.6" height="11.4" viewBox="0 0 14.6 11.4"><path d="M0.3 1.1 Q0.3 0.1 1.3 0.1 L4.9 0.1 Q5.4 0.1 5.8 0.5 L6.6 1.3 L13.5 1.3 Q14.4 1.3 14.4 2.2 L14.4 3 L0.3 3 Z" fill="#f7c640"/><path d="M0.3 1.1 Q0.3 0.1 1.3 0.1 L4.9 0.1 Q5.4 0.1 5.8 0.5 L6.6 1.3 L6.6 3 L0.3 3 Z" fill="#eba800"/><path d="M0.2 2.9 L14.4 2.9 L14.4 10.5 Q14.4 11.3 13.6 11.3 L1 11.3 Q0.2 11.3 0.2 10.5 Z" fill="url(#fg)"/></svg>
<div class="t" style="left:242.80px;top:313.93px;font-size:12px;color:#ededed;transform:scaleX(0.915);transform-origin:0 0;">2024_11</div>
<div class="t" style="left:480.70px;top:313.93px;font-size:12px;color:#dcdcdc;transform:scaleX(0.985);transform-origin:0 0;">3/22/2024 1:12 PM</div>
<div class="t" style="left:622.70px;top:313.93px;font-size:12px;color:#dcdcdc;">File folder</div>
<svg class="r" style="left:223.6px;top:342.302px" width="14.6" height="11.4" viewBox="0 0 14.6 11.4"><path d="M0.3 1.1 Q0.3 0.1 1.3 0.1 L4.9 0.1 Q5.4 0.1 5.8 0.5 L6.6 1.3 L13.5 1.3 Q14.4 1.3 14.4 2.2 L14.4 3 L0.3 3 Z" fill="#f7c640"/><path d="M0.3 1.1 Q0.3 0.1 1.3 0.1 L4.9 0.1 Q5.4 0.1 5.8 0.5 L6.6 1.3 L6.6 3 L0.3 3 Z" fill="#eba800"/><path d="M0.2 2.9 L14.4 2.9 L14.4 10.5 Q14.4 11.3 13.6 11.3 L1 11.3 Q0.2 11.3 0.2 10.5 Z" fill="url(#fg)"/></svg>
<div class="t" style="left:242.80px;top:343.34px;font-size:12px;color:#ededed;transform:scaleX(0.915);transform-origin:0 0;">2024_12</div>
<div class="t" style="left:480.70px;top:343.34px;font-size:12px;color:#dcdcdc;transform:scaleX(0.985);transform-origin:0 0;">4/1/2024 5:11 PM</div>
<div class="t" style="left:622.70px;top:343.34px;font-size:12px;color:#dcdcdc;">File folder</div>
<svg class="r" style="left:223.6px;top:371.719px" width="14.6" height="11.4" viewBox="0 0 14.6 11.4"><path d="M0.3 1.1 Q0.3 0.1 1.3 0.1 L4.9 0.1 Q5.4 0.1 5.8 0.5 L6.6 1.3 L13.5 1.3 Q14.4 1.3 14.4 2.2 L14.4 3 L0.3 3 Z" fill="#f7c640"/><path d="M0.3 1.1 Q0.3 0.1 1.3 0.1 L4.9 0.1 Q5.4 0.1 5.8 0.5 L6.6 1.3 L6.6 3 L0.3 3 Z" fill="#eba800"/><path d="M0.2 2.9 L14.4 2.9 L14.4 10.5 Q14.4 11.3 13.6 11.3 L1 11.3 Q0.2 11.3 0.2 10.5 Z" fill="url(#fg)"/></svg>
<div class="t" style="left:242.80px;top:372.76px;font-size:12px;color:#ededed;transform:scaleX(0.915);transform-origin:0 0;">2024_13</div>
<div class="t" style="left:480.70px;top:372.76px;font-size:12px;color:#dcdcdc;transform:scaleX(0.985);transform-origin:0 0;">4/6/2024 11:50 AM</div>
<div class="t" style="left:622.70px;top:372.76px;font-size:12px;color:#dcdcdc;">File folder</div>
<svg class="r" style="left:223.6px;top:401.136px" width="14.6" height="11.4" viewBox="0 0 14.6 11.4"><path d="M0.3 1.1 Q0.3 0.1 1.3 0.1 L4.9 0.1 Q5.4 0.1 5.8 0.5 L6.6 1.3 L13.5 1.3 Q14.4 1.3 14.4 2.2 L14.4 3 L0.3 3 Z" fill="#f7c640"/><path d="M0.3 1.1 Q0.3 0.1 1.3 0.1 L4.9 0.1 Q5.4 0.1 5.8 0.5 L6.6 1.3 L6.6 3 L0.3 3 Z" fill="#eba800"/><path d="M0.2 2.9 L14.4 2.9 L14.4 10.5 Q14.4 11.3 13.6 11.3 L1 11.3 Q0.2 11.3 0.2 10.5 Z" fill="url(#fg)"/></svg>
<div class="t" style="left:242.80px;top:402.18px;font-size:12px;color:#ededed;transform:scaleX(0.915);transform-origin:0 0;">2024_14</div>
<div class="t" style="left:480.70px;top:402.18px;font-size:12px;color:#dcdcdc;transform:scaleX(0.985);transform-origin:0 0;">4/13/2024 11:39 PM</div>
<div class="t" style="left:622.70px;top:402.18px;font-size:12px;color:#dcdcdc;">File folder</div>
<svg class="r" style="left:223.6px;top:430.55300000000005px" width="14.6" height="11.4" viewBox="0 0 14.6 11.4"><path d="M0.3 1.1 Q0.3 0.1 1.3 0.1 L4.9 0.1 Q5.4 0.1 5.8 0.5 L6.6 1.3 L13.5 1.3 Q14.4 1.3 14.4 2.2 L14.4 3 L0.3 3 Z" fill="#f7c640"/><path d="M0.3 1.1 Q0.3 0.1 1.3 0.1 L4.9 0.1 Q5.4 0.1 5.8 0.5 L6.6 1.3 L6.6 3 L0.3 3 Z" fill="#eba800"/><path d="M0.2 2.9 L14.4 2.9 L14.4 10.5 Q14.4 11.3 13.6 11.3 L1 11.3 Q0.2 11.3 0.2 10.5 Z" fill="url(#fg)"/></svg>
<div class="t" style="left:242.80px;top:431.60px;font-size:12px;color:#ededed;transform:scaleX(0.915);transform-origin:0 0;">2024_15</div>
<div class="t" style="left:480.70px;top:431.60px;font-size:12px;color:#dcdcdc;transform:scaleX(0.985);transform-origin:0 0;">4/19/2024 8:35 PM</div>
<div class="t" style="left:622.70px;top:431.60px;font-size:12px;color:#dcdcdc;">File folder</div>
<svg class="r" style="left:223.6px;top:459.97px" width="14.6" height="11.4" viewBox="0 0 14.6 11.4"><path d="M0.3 1.1 Q0.3 0.1 1.3 0.1 L4.9 0.1 Q5.4 0.1 5.8 0.5 L6.6 1.3 L13.5 1.3 Q14.4 1.3 14.4 2.2 L14.4 3 L0.3 3 Z" fill="#f7c640"/><path d="M0.3 1.1 Q0.3 0.1 1.3 0.1 L4.9 0.1 Q5.4 0.1 5.8 0.5 L6.6 1.3 L6.6 3 L0.3 3 Z" fill="#eba800"/><path d="M0.2 2.9 L14.4 2.9 L14.4 10.5 Q14.4 11.3 13.6 11.3 L1 11.3 Q0.2 11.3 0.2 10.5 Z" fill="url(#fg)"/></svg>
<div class="t" style="left:242.80px;top:461.01px;font-size:12px;color:#ededed;transform:scaleX(0.915);transform-origin:0 0;">2024_16</div>
<div class="t" style="left:480.70px;top:461.01px;font-size:12px;color:#dcdcdc;transform:scaleX(0.985);transform-origin:0 0;">4/26/2024 3:26 PM</div>
<div class="t" style="left:622.70px;top:461.01px;font-size:12px;color:#dcdcdc;">File folder</div>
<svg class="r" style="left:223.6px;top:489.387px" width="14.6" height="11.4" viewBox="0 0 14.6 11.4"><path d="M0.3 1.1 Q0.3 0.1 1.3 0.1 L4.9 0.1 Q5.4 0.1 5.8 0.5 L6.6 1.3 L13.5 1.3 Q14.4 1.3 14.4 2.2 L14.4 3 L0.3 3 Z" fill="#f7c640"/><path d="M0.3 1.1 Q0.3 0.1 1.3 0.1 L4.9 0.1 Q5.4 0.1 5.8 0.5 L6.6 1.3 L6.6 3 L0.3 3 Z" fill="#eba800"/><path d="M0.2 2.9 L14.4 2.9 L14.4 10.5 Q14.4 11.3 13.6 11.3 L1 11.3 Q0.2 11.3 0.2 10.5 Z" fill="url(#fg)"/></svg>
<div class="t" style="left:242.80px;top:490.43px;font-size:12px;color:#ededed;transform:scaleX(0.915);transform-origin:0 0;">2024_17</div>
<div class="t" style="left:480.70px;top:490.43px;font-size:12px;color:#dcdcdc;transform:scaleX(0.985);transform-origin:0 0;">5/4/2024 9:16 PM</div>
<div class="t" style="left:622.70px;top:490.43px;font-size:12px;color:#dcdcdc;">File folder</div>
<svg class="r" style="left:223.6px;top:518.804px" width="14.6" height="11.4" viewBox="0 0 14.6 11.4"><path d="M0.3 1.1 Q0.3 0.1 1.3 0.1 L4.9 0.1 Q5.4 0.1 5.8 0.5 L6.6 1.3 L13.5 1.3 Q14.4 1.3 14.4 2.2 L14.4 3 L0.3 3 Z" fill="#f7c640"/><path d="M0.3 1.1 Q0.3 0.1 1.3 0.1 L4.9 0.1 Q5.4 0.1 5.8 0.5 L6.6 1.3 L6.6 3 L0.3 3 Z" fill="#eba800"/><path d="M0.2 2.9 L14.4 2.9 L14.4 10.5 Q14.4 11.3 13.6 11.3 L1 11.3 Q0.2 11.3 0.2 10.5 Z" fill="url(#fg)"/></svg>
<div class="t" style="left:242.80px;top:519.85px;font-size:12px;color:#ededed;transform:scaleX(0.915);transform-origin:0 0;">2024_18</div>
<div class="t" style="left:480.70px;top:519.85px;font-size:12px;color:#dcdcdc;transform:scaleX(0.985);transform-origin:0 0;">5/9/2024 11:38 AM</div>
<div class="t" style="left:622.70px;top:519.85px;font-size:12px;color:#dcdcdc;">File folder</div>
<div class="r" style="left:789px;top:144px;width:5.3px;height:96px;background:#979797;"></div>
<div class="r" style="left:221px;top:553.7px;width:507px;height:5.3px;background:#979797;"></div>
<div class="r" style="left:728px;top:547.5px;width:38px;height:1px;background:#0f0f0f;"></div>
<div class="r" style="left:0px;top:564px;width:800px;height:21px;background:#1c1c1c;"></div>
<div class="t" style="left:12.00px;top:570.30px;font-size:11.7px;color:#ffffff;">54 items</div>
<div class="r" style="left:66px;top:571px;width:1px;height:10px;background:#d0d0d0;"></div>
<div class="r" style="left:751px;top:564.2px;width:22px;height:21px;background:linear-gradient(#545454,#3e3e3e);"></div>
<svg class="r" style="left:755px;top:568px" width="16" height="17" viewBox="0 0 16 17"><rect x="0.2" y="0.4" width="15.3" height="15.6" rx="1.6" fill="#cdc9c6"/><path d="M2.3 3.7 H13.1" stroke="#7a7a7a" stroke-width="1.2"/><path d="M2.3 7 H13.1" stroke="#707070" stroke-width="1.2"/><path d="M2.3 10.3 H13.1" stroke="#505050" stroke-width="1.2"/><path d="M2.3 13.3 H13.1" stroke="#1e1e1e" stroke-width="1.2"/></svg>
<svg class="r" style="left:776px;top:567px" width="16" height="17" viewBox="0 0 16 17"><rect x="0.2" y="0.5" width="15.6" height="15.6" rx="1.6" fill="#cdc9c6"/><rect x="3" y="3" width="10.6" height="8.2" fill="#ffffff" stroke="#3c3c3c" stroke-width="0.8"/><path d="M3 13.4 H13.6" stroke="#2a2a2a" stroke-width="1"/></svg>
<div class="r" style="left:798px;top:128px;width:1px;height:436px;background:#151515;"></div>
<div class="r" style="left:0px;top:128px;width:1px;height:436px;background:#151515;"></div>
<div class="r" style="left:799px;top:0px;width:1px;height:578px;background:linear-gradient(#3c3c3c, #8a8a8a 40px, #8a8a8a);"></div>
<div class="r" style="left:792px;top:571px;width:8px;height:14px;border-right:1px solid #8a8a8a;border-bottom-right-radius:7px;box-sizing:border-box"></div>
</body></html>
